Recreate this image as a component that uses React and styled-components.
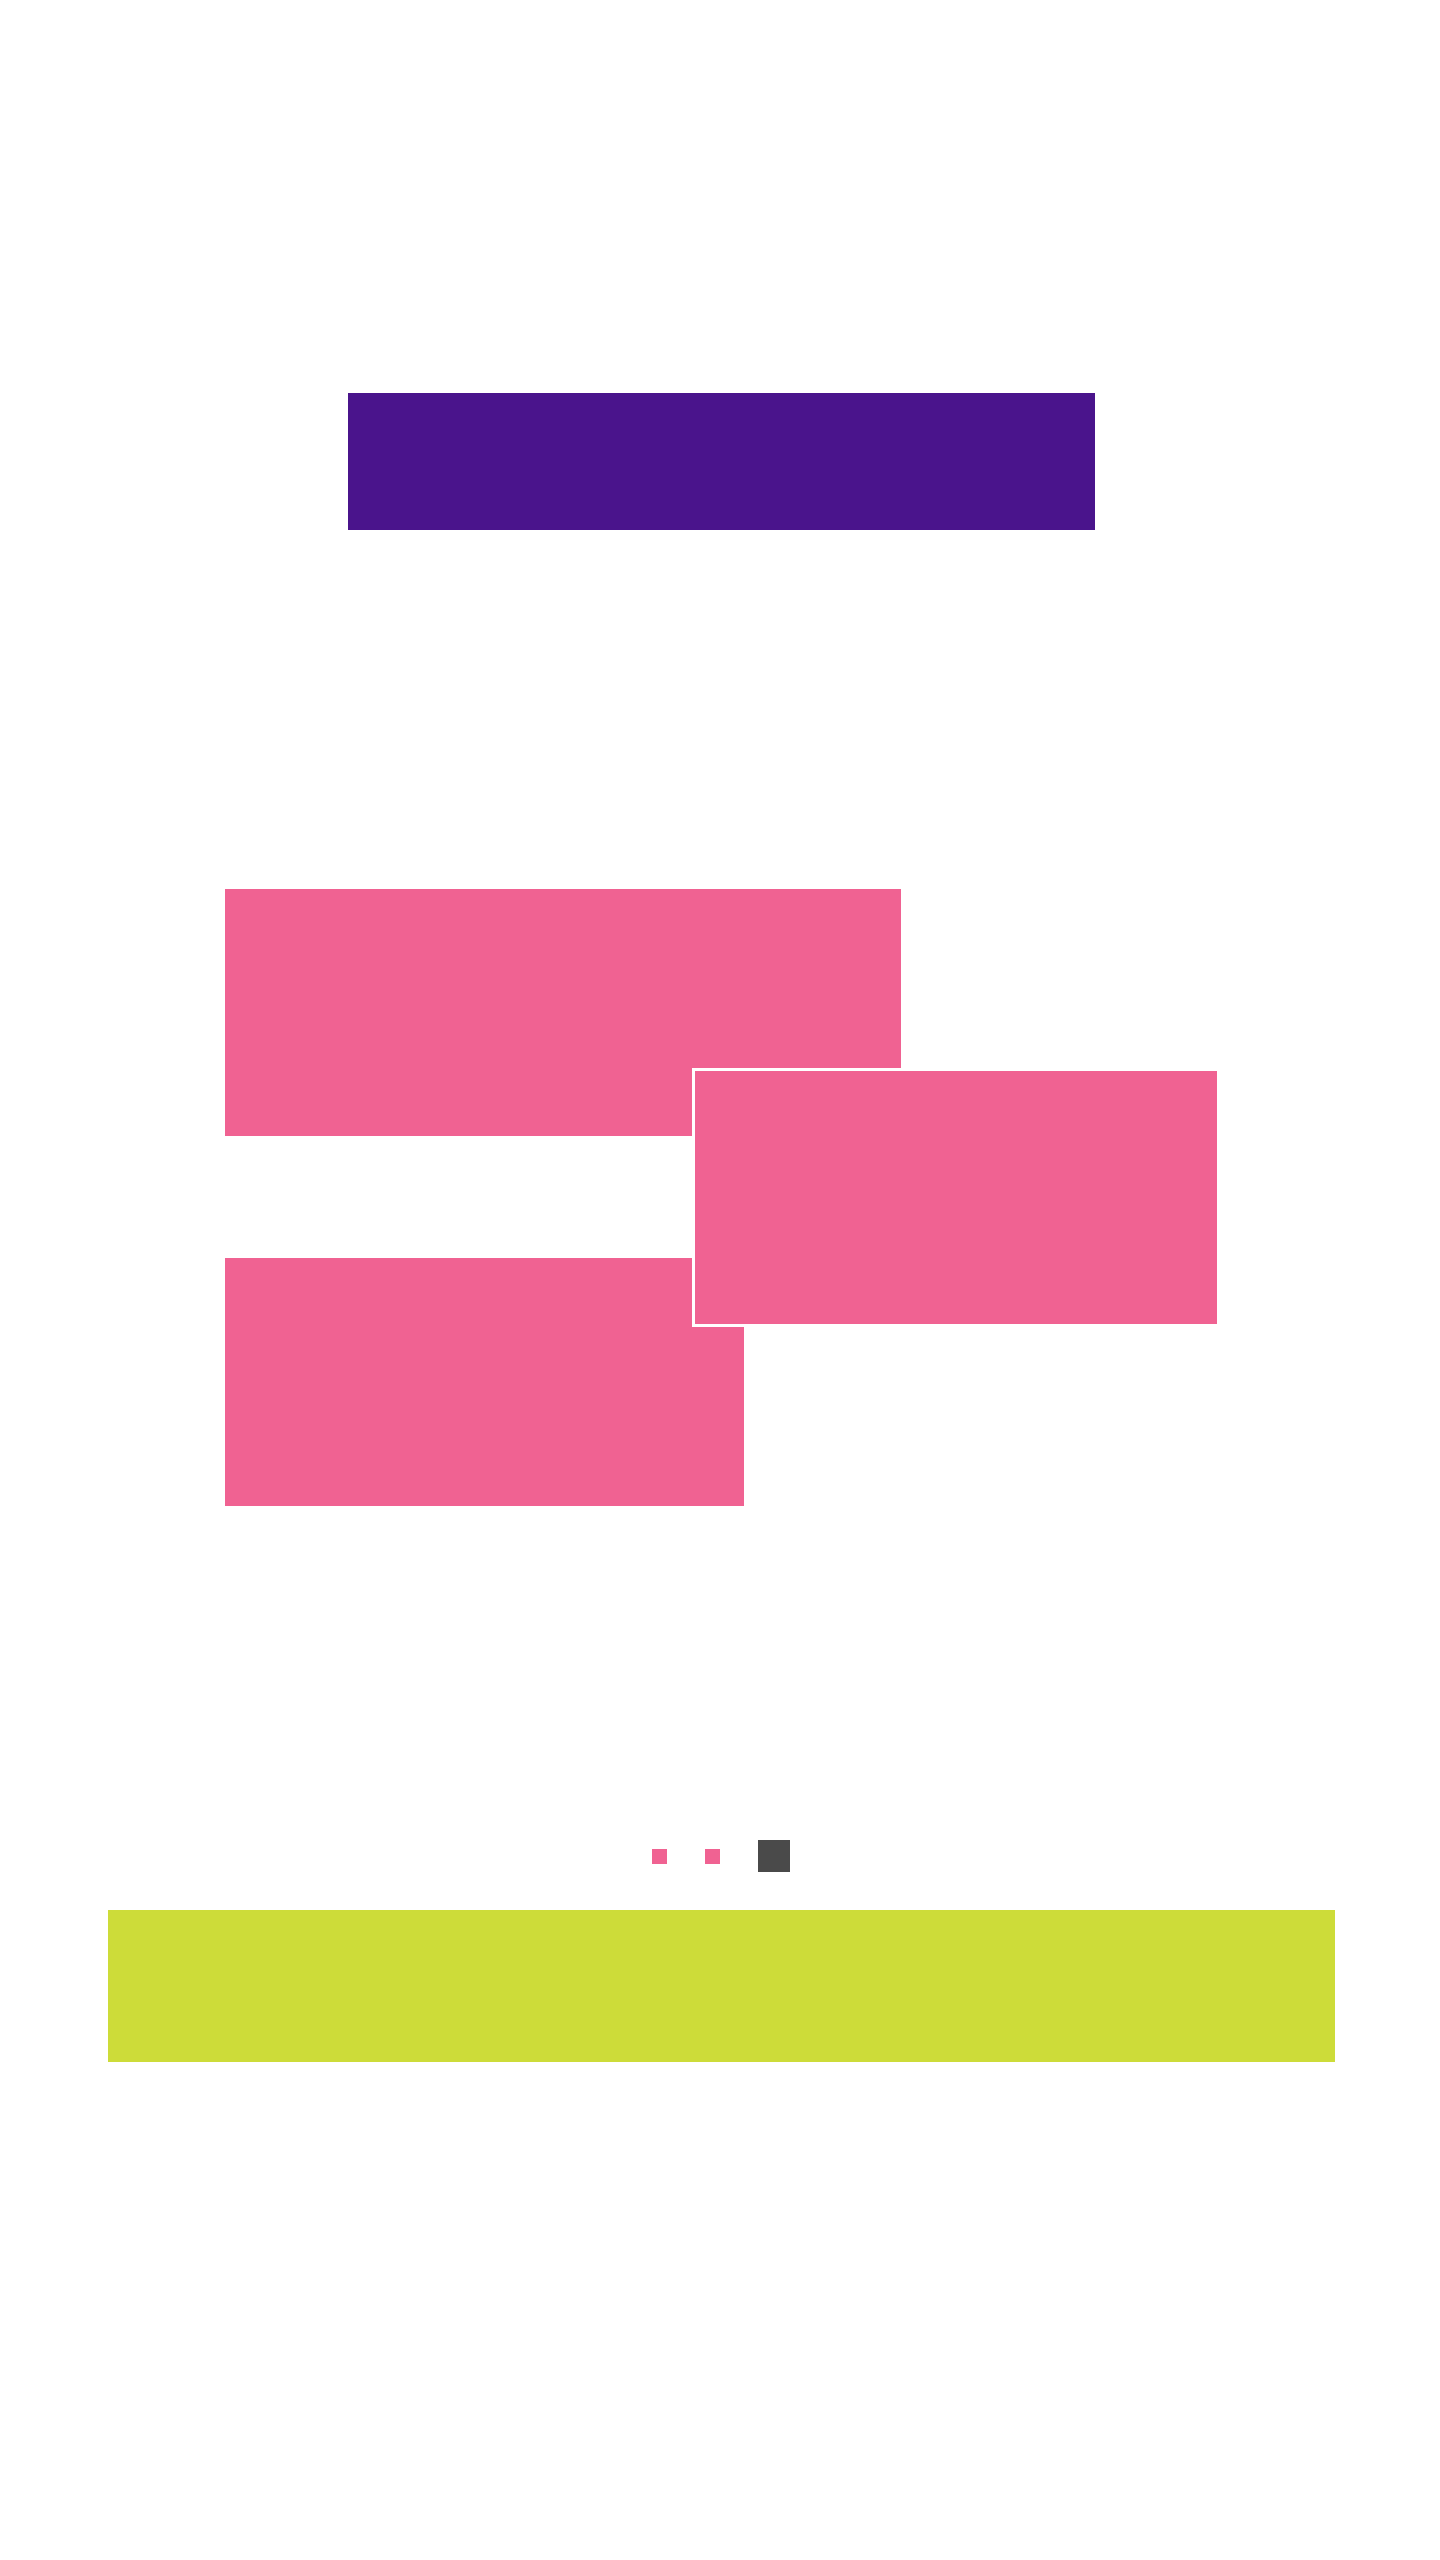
import React from "react";
import styled, { createGlobalStyle } from "styled-components";

const Global = createGlobalStyle`
  html, body { margin: 0; padding: 0; background: #ffffff; }
  body { font-family: "Liberation Sans", Arial, sans-serif; }
  * { box-sizing: border-box; }
`;

const Page = styled.main`
  width: 1440px;
  min-height: 2560px;
  padding-top: 393px;
  display: flex;
  flex-direction: column;
`;

const Banner = styled.header`
  margin-left: 348px;
  width: 747px;
  height: 137px;
  background: #4a148c;
`;

const Board = styled.section`
  position: relative;
  margin-top: 359px;
  margin-left: 225px;
  display: flex;
  flex-direction: column;
  gap: 122px;
`;

const Card = styled.div`
  width: ${(p) => p.$w}px;
  height: ${(p) => p.$h}px;
  background: #f06292;
`;

const DragCard = styled.div`
  position: absolute;
  left: 467px;
  top: 179px;
  width: 528px;
  height: 259px;
  background: #f06292;
  border: 3px solid #ffffff;
`;

const Pager = styled.nav`
  margin-top: 334px;
  margin-left: 652px;
  display: flex;
  align-items: center;
  gap: 38px;
  height: 32px;
`;

const Dot = styled.span`
  display: block;
  width: ${(p) => (p.$active ? 32 : 15)}px;
  height: ${(p) => (p.$active ? 32 : 15)}px;
  background: ${(p) => (p.$active ? "#4a4a4a" : "#f06292")};
`;

const Footer = styled.footer`
  margin-top: 38px;
  margin-left: 108px;
  width: 1227px;
  height: 152px;
  background: #cddc39;
`;

export default function App() {
  return (
    <>
      <Global />
      <Page>
        <Banner />
        <Board>
          <Card $w={676} $h={247} />
          <Card $w={519} $h={248} />
          <DragCard />
        </Board>
        <Pager>
          <Dot />
          <Dot />
          <Dot $active />
        </Pager>
        <Footer />
      </Page>
    </>
  );
}
